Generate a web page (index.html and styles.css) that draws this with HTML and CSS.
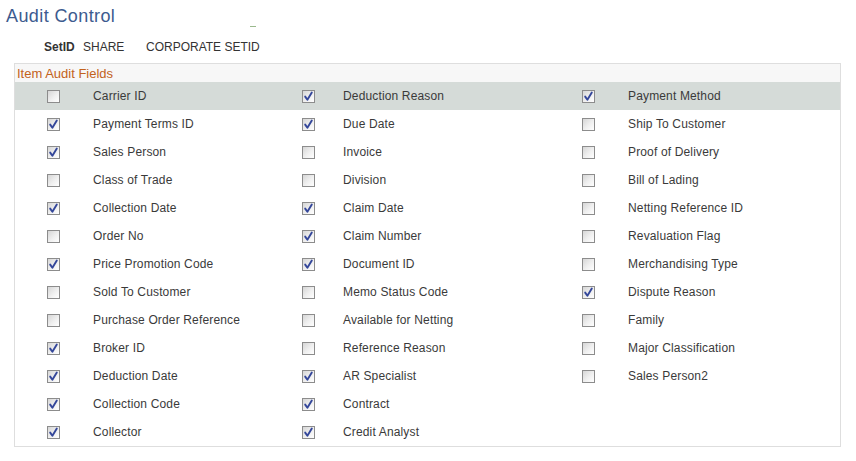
FILE: index.html
```html
<!DOCTYPE html>
<html>
<head>
<meta charset="utf-8">
<link rel="stylesheet" href="styles.css">
</head>
<body>
<div class="page">
  <div class="title-row">
    <h1 class="title">Audit Control</h1>
    <span class="dash"></span>
  </div>
  <div class="setid-row">
    <span class="setid-label">SetID</span>
    <span class="setid-val">SHARE</span>
    <span class="setid-desc">CORPORATE SETID</span>
  </div>
  <div class="group">
    <div class="group-head">Item Audit Fields</div>
    <div class="grid" id="grid"></div>
  </div>
</div>
<script src="app.js"></script>
</body>
</html>
```

FILE: app.js
```js
var rows = [
  [[0,"Carrier ID"],[1,"Deduction Reason"],[1,"Payment Method"]],
  [[1,"Payment Terms ID"],[1,"Due Date"],[0,"Ship To Customer"]],
  [[1,"Sales Person"],[0,"Invoice"],[0,"Proof of Delivery"]],
  [[0,"Class of Trade"],[0,"Division"],[0,"Bill of Lading"]],
  [[1,"Collection Date"],[1,"Claim Date"],[0,"Netting Reference ID"]],
  [[0,"Order No"],[1,"Claim Number"],[0,"Revaluation Flag"]],
  [[1,"Price Promotion Code"],[1,"Document ID"],[0,"Merchandising Type"]],
  [[0,"Sold To Customer"],[0,"Memo Status Code"],[1,"Dispute Reason"]],
  [[0,"Purchase Order Reference"],[0,"Available for Netting"],[0,"Family"]],
  [[1,"Broker ID"],[0,"Reference Reason"],[0,"Major Classification"]],
  [[1,"Deduction Date"],[1,"AR Specialist"],[0,"Sales Person2"]],
  [[1,"Collection Code"],[1,"Contract"],null],
  [[1,"Collector"],[1,"Credit Analyst"],null]
];
var check = '<svg class="tick" viewBox="0 0 13 13" width="13" height="13"><path d="M3.2 6.6 L5.4 9.8 L9.8 2.6" fill="none" stroke="#34479a" stroke-width="1.9" stroke-linejoin="round" stroke-linecap="round"/></svg>';
var grid = document.getElementById("grid");
var html = "";
rows.forEach(function (r, i) {
  html += '<div class="row' + (i === 0 ? ' hl' : '') + '">';
  r.forEach(function (c) {
    if (c) {
      html += '<span class="cb' + (c[0] ? ' on' : '') + '">' + (c[0] ? check : '') + '</span>';
      html += '<span class="lbl">' + c[1] + '</span>';
    } else {
      html += '<span></span><span></span>';
    }
  });
  html += '</div>';
});
grid.innerHTML = html;
```

FILE: styles.css
```css
html, body {
  margin: 0;
  padding: 0;
  background: #fff;
}
body {
  font-family: Arial, "Liberation Sans", sans-serif;
  color: #333;
}
.page {
  width: 856px;
  height: 461px;
  overflow: hidden;
}
.title-row {
  height: 36px;
  display: flex;
  align-items: flex-start;
}
.title {
  margin: 5px 0 0 6px;
  font-size: 18px;
  letter-spacing: 0.4px;
  font-weight: normal;
  color: #3d5b8f;
  line-height: 22px;
}
.dash {
  width: 6px;
  height: 1px;
  background: #9ab98d;
  margin: 26px 0 0 135px;
}
.setid-row {
  display: flex;
  align-items: center;
  height: 22px;
  padding-left: 44px;
  font-size: 12px;
  color: #333;
}
.setid-label {
  font-weight: bold;
  width: 39px;
}
.setid-val {
  width: 63px;
}
.group {
  margin: 5px 0 0 14px;
  width: 825px;
  height: 382px;
  border: 1px solid #dedede;
}
.group-head {
  height: 18px;
  line-height: 19px;
  padding-left: 2px;
  font-size: 13px;
  color: #c3621c;
  background: #f7f7f7;
}
.row {
  display: grid;
  grid-template-columns: 46px 209px 41px 239px 46px 1fr;
  align-items: center;
  height: 28px;
  padding-left: 32px;
  font-size: 12px;
  letter-spacing: 0.15px;
  color: #3a3a3a;
}
.row.hl {
  background: #d5dbd8;
}
.cb {
  width: 11px;
  height: 11px;
  border: 1px solid #8c8c8c;
  background: linear-gradient(135deg, #d6d6d6 0%, #f0f0f0 55%, #ffffff 100%);
  position: relative;
}
.tick {
  position: absolute;
  left: -1px;
  top: -1px;
}
.lbl {
  white-space: nowrap;
}
```
